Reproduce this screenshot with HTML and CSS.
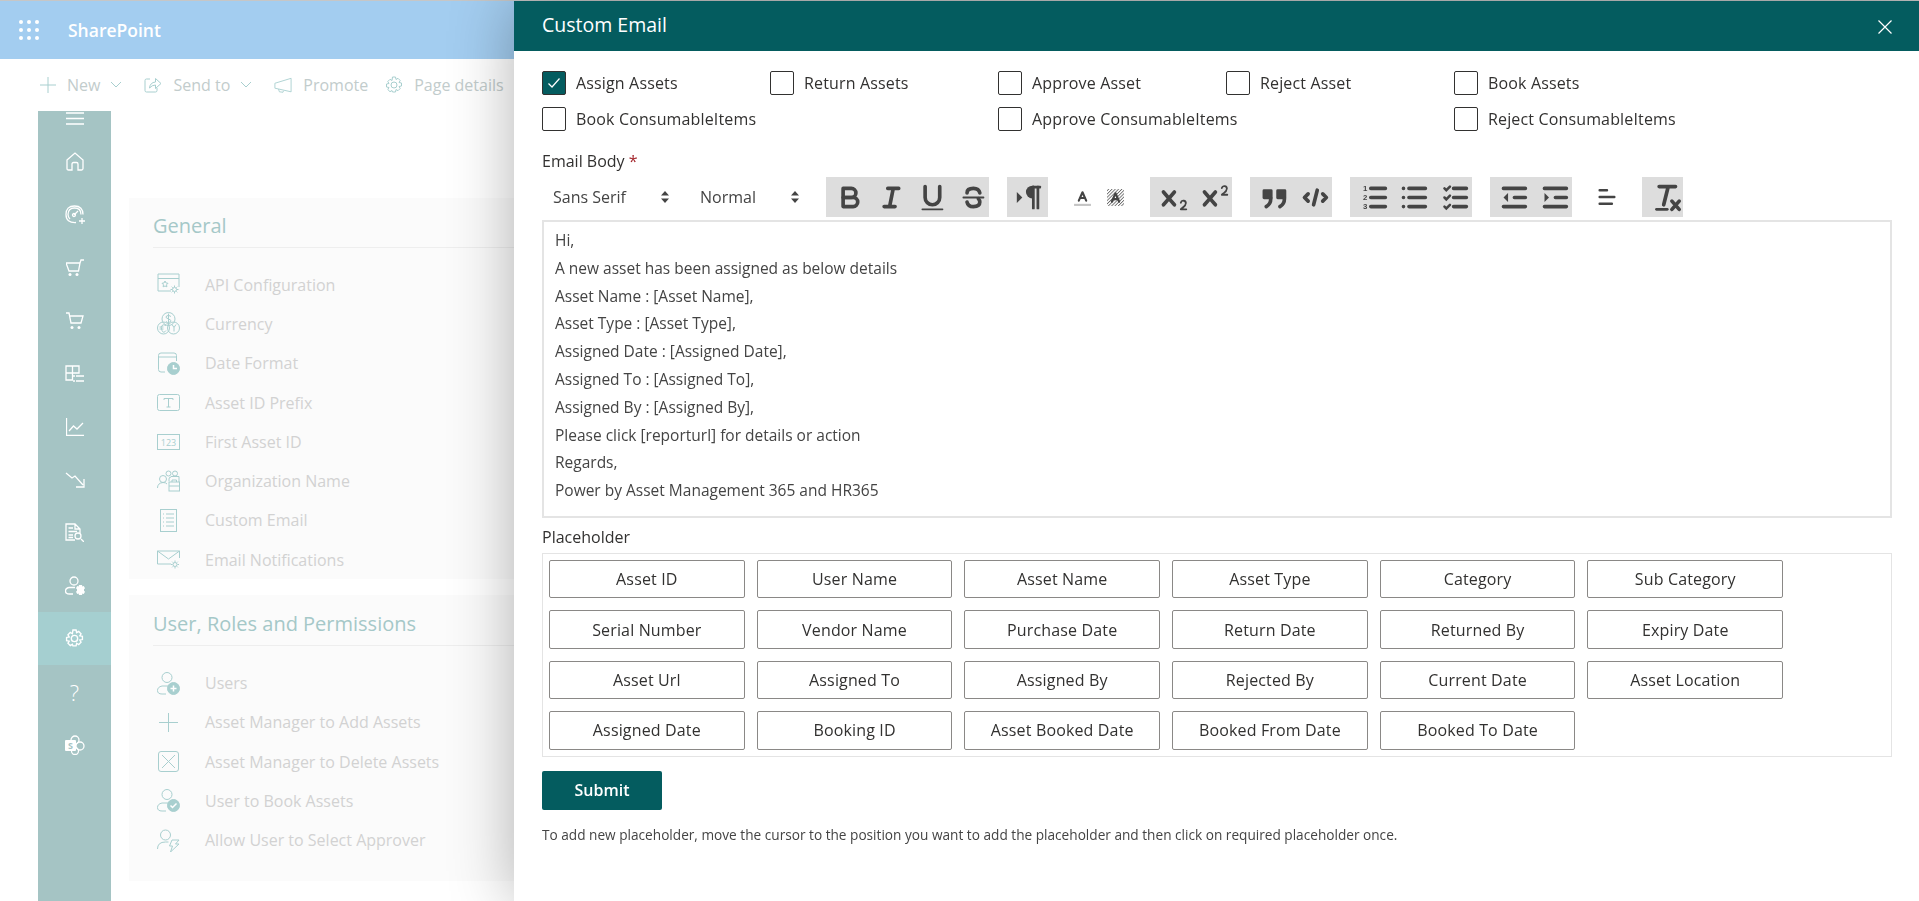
FILE: index.html
```html
<!DOCTYPE html>
<html lang="en">

<head>
    <meta charset="UTF-8">
    <meta name="viewport" content="width=device-width, initial-scale=1.0">
    <title>Custom Email</title>
    <link rel="stylesheet" href="styles.css">
</head>

<body>
    <!-- page behind the panel -->
    <header class="suite-bar">
        <svg class="waffle" width="20" height="20" viewBox="0 0 20 20" fill="#fff">
            <circle cx="2" cy="2" r="2" /><circle cx="10" cy="2" r="2" /><circle cx="18" cy="2" r="2" />
            <circle cx="2" cy="10" r="2" /><circle cx="10" cy="10" r="2" /><circle cx="18" cy="10" r="2" />
            <circle cx="2" cy="18" r="2" /><circle cx="10" cy="18" r="2" /><circle cx="18" cy="18" r="2" />
        </svg>
        <span class="suite-title">SharePoint</span>
    </header>

    <div class="command-bar">
        <span class="cmd">
            <svg class="ico" width="16" height="16" viewBox="0 0 16 16"><path d="M8 0v16M0 8h16" /></svg>New
            <svg class="ico chev" width="10" height="6" viewBox="0 0 10 6"><path d="M0 0l5 5 5-5" /></svg>
        </span>
        <span class="cmd">
            <svg class="ico" width="18" height="18" viewBox="0 0 18 18"><path d="M6 3H2.500Q1 3 1 4.500v10Q1 16 2.500 16h9q1.500 0 1.500-1.500V12M5.500 12Q6 6.500 11.500 6V2.500L17 7.500l-5.500 5V9Q8 9 5.500 12z" /></svg>Send to
            <svg class="ico chev" width="10" height="6" viewBox="0 0 10 6"><path d="M0 0l5 5 5-5" /></svg>
        </span>
        <span class="cmd">
            <svg class="ico" width="18" height="17" viewBox="0 0 20 18"><path d="M19 1v15L1 12V6.500zM5 13l1 3 4 .5.500-1.500" /></svg>Promote
        </span>
        <span class="cmd cmd-last">
            <svg class="ico" width="18" height="18" viewBox="0 0 18 18"><circle cx="9" cy="9" r="3" /><path d="M7.500 1h3l.500 2.500 2-1.200 2.200 2.200-1.200 2 2.500.500v3l-2.500.500 1.200 2-2.200 2.200-2-1.200-.500 2.500h-3L7 14.500l-2 1.200-2.200-2.200 1.200-2L1.500 11V8l2.500-.500-1.200-2L5 3.300l2 1.200z" /></svg>Page details
        </span>
    </div>

    <div class="content">
        <nav class="rail">
            <div class="rail-burger">
                <svg class="ico" width="18" height="13" viewBox="0 0 18 13"><path d="M0 1h18M0 6.500h18M0 12h18" /></svg>
            </div>
            <div class="rail-item"><svg class="ico" width="18" height="19" viewBox="0 0 18 19"><path d="M1 8l8-7 8 7v8.500q0 1.500-1.500 1.500H12v-6q0-1.500-1.500-1.500h-3Q6 10.500 6 12v6H2.500Q1 18 1 16.500z" /></svg></div>
            <div class="rail-item"><svg class="ico" width="20" height="19" viewBox="0 0 20 19"><path d="M11 17.500Q1 18 1 9.500 1 1 9.500 1 18 1 18 9.500M5 14Q3 12 3 9.500 3 3 9.500 3 16 3 16 9.500M9 10l4-4M14 16h6M17 13v6" /><circle cx="9" cy="10" r="1.500" /></svg></div>
            <div class="rail-item"><svg class="ico" width="18" height="18" viewBox="0 0 18 18"><path d="M0 4h14l-1.500 8H3zM14 4l1-3h3" /><circle class="solid" cx="4" cy="15.500" r="1.500" /><circle class="solid" cx="11" cy="15.500" r="1.500" /></svg></div>
            <div class="rail-item"><svg class="ico" width="18" height="18" viewBox="0 0 18 18"><path d="M0 1h3l2 10h10l2-7H3.500" /><circle class="solid" cx="6" cy="15.500" r="1.500" /><circle class="solid" cx="13" cy="15.500" r="1.500" /></svg></div>
            <div class="rail-item"><svg class="ico" width="19" height="18" viewBox="0 0 19 18"><path d="M8 15H1V1h13v7H1M7.500 1v14M11 11h8M11 16h8" /><circle class="solid" cx="9" cy="11" r="1" /><circle class="solid" cx="9" cy="16" r="1" /></svg></div>
            <div class="rail-item"><svg class="ico" width="18" height="18" viewBox="0 0 18 18"><path d="M.5 0v17.500H18M3 13l4.500-5 3.500 3 6-6" /></svg></div>
            <div class="rail-item"><svg class="ico" width="20" height="16" viewBox="0 0 20 16"><path d="M1 1l6 5 3-2 8 9M19 7v8h-8" /></svg></div>
            <div class="rail-item"><svg class="ico" width="19" height="19" viewBox="0 0 19 19"><path d="M10 17H1V1h9l5 5v4M10 1v5h5M3.500 5H8M3.500 8.500H12M3.500 12H8M3.500 14.500H8M16 16l3 3" /><circle cx="13" cy="13" r="3" /></svg></div>
            <div class="rail-item"><svg class="ico" width="20" height="19" viewBox="0 0 20 19"><circle cx="9" cy="5" r="4" /><path d="M8 18H4.500Q.5 18 .5 15t4-3.500H10" /><path class="solid" d="M14 9h3l.400 1.500 1.400-.500 1.200 2.200-1 1 .0 1.600 1 1-1.200 2.200-1.400-.500L17 19h-3l-.400-1.500-1.400.500-1.200-2.200 1-1v-1.600l-1-1L12.200 10l1.400.500z" /></svg></div>
            <div class="rail-item is-active"><svg class="ico" width="19" height="19" viewBox="0 0 18 18"><circle cx="9" cy="9" r="3" /><path d="M7.500 1h3l.500 2.500 2-1.200 2.200 2.200-1.200 2 2.500.500v3l-2.500.500 1.200 2-2.200 2.200-2-1.200-.500 2.500h-3L7 14.500l-2 1.200-2.200-2.200 1.200-2L1.500 11V8l2.500-.500-1.200-2L5 3.300l2 1.200z" /></svg></div>
            <div class="rail-item"><span class="rail-help">?</span></div>
            <div class="rail-item"><svg class="ico" width="20" height="20" viewBox="0 0 20 20"><circle cx="10" cy="5" r="4" /><circle cx="15" cy="11" r="4" /><circle cx="10" cy="16" r="3.500" /><rect class="solid" x="0" y="5" width="11" height="11" rx="1" /><text class="rail-s" x="5.500" y="14">S</text></svg></div>
        </nav>

        <main class="settings">
            <section class="card">
                <h2 class="card-title">General</h2>
                <div class="row"><svg class="ico" width="23" height="23" viewBox="0 0 23 23"><path d="M14 18H1V1h21v13M1 5.500h21" /><path d="M8 8l1 2 2 .300-1.500 1.500.400 2L8 13l-1.900.800.400-2L5 10.300 7 10z" /><circle cx="17.500" cy="16.500" r="2" /><path d="M17.500 12.500v1.500M17.500 19v1.500M13.500 16.500H15M20 16.500h1.500M14.700 13.700l1 1M19.300 18.300l1 1M14.700 19.300l1-1M19.300 14.700l1-1" /></svg>API Configuration</div>
                <div class="row"><svg class="ico" width="23" height="23" viewBox="0 0 23 23"><circle cx="11.500" cy="7" r="6.500" /><circle cx="6.500" cy="16" r="6" /><circle cx="16.500" cy="16" r="6" /><path d="M14 4.500q-2.500-2-4.500-.500t2 3 1.500 3-4-.500M11.500 1.500v11M9 13.500q-2.500-1.500-4 0t0 5 4 0M2.500 15h4M2.500 17h4M15 12.500l2 3 2-3M17 15.500v4" /></svg>Currency</div>
                <div class="row"><svg class="ico" width="23" height="23" viewBox="0 0 23 23"><path d="M8 20H4q-2.500 0-2.500-2.500V3.500Q1.500 1 4 1h13q2.500 0 2.500 2.500V9M1.500 5h18" /><circle class="solid" cx="16.500" cy="16.500" r="6" /><path class="cut" d="M16.500 13v3.500H20" /></svg>Date Format</div>
                <div class="row"><svg class="ico" width="23" height="18" viewBox="0 0 23 18"><rect x=".5" y=".5" width="22" height="16" rx="2" /><path d="M7 6V4.500h9V6M11.500 4.500V13M9.500 13h4" /></svg>Asset ID Prefix</div>
                <div class="row"><svg class="ico" width="23" height="16" viewBox="0 0 23 16"><rect x=".5" y=".5" width="22" height="15" /><text class="ico-text" x="11.500" y="11.500">123</text></svg>First Asset ID</div>
                <div class="row"><svg class="ico" width="23" height="22" viewBox="0 0 23 22"><circle cx="6" cy="9" r="3.500" /><circle cx="11.500" cy="3.500" r="2.500" /><circle cx="18" cy="3.500" r="2.500" /><path d="M.5 18q0-5 5.500-5.500 3 0 4 1.500M14 6.500h8V12M12 11v-2q0-2 2-2" /><rect x="12" y="12" width="10.500" height="9" /><path d="M12 16h10.500M15 12v-2h4.500v2" /></svg>Organization Name</div>
                <div class="row"><svg class="ico" width="23" height="23" viewBox="0 0 23 23"><rect x="3.500" y=".5" width="16" height="22" /><path d="M9 5h8M9 9h8M9 13h8M9 17h8M6 5h1M6 9h1M6 13h1M6 17h1" /></svg>Custom Email</div>
                <div class="row"><svg class="ico" width="23" height="20" viewBox="0 0 23 20"><path d="M14 14H.5V1h22v7M.5 1l11 8 11-8" /><circle cx="18" cy="14.500" r="2" /><path d="M18 10.500V12M18 17v1.500M14 14.500h1.500M20.500 14.500H22M15.200 11.700l1 1M19.800 16.300l1 1M15.200 17.300l1-1M19.800 12.700l1-1" /></svg>Email Notifications</div>
            </section>

            <section class="card card-second">
                <h2 class="card-title">User, Roles and Permissions</h2>
                <div class="row"><svg class="ico" width="23" height="23" viewBox="0 0 23 23"><circle cx="10" cy="5.500" r="5" /><path d="M9 22H5q-4.500 0-4.500-3.500T5 14h6" /><circle class="solid" cx="16.500" cy="16.500" r="6" /><path class="cut" d="M16.500 13.500v6M13.500 16.500h6" /></svg>Users</div>
                <div class="row"><svg class="ico" width="23" height="19" viewBox="0 0 19 19"><path d="M9.500 0v19M0 9.500h19" /></svg>Asset Manager to Add Assets</div>
                <div class="row"><svg class="ico" width="23" height="21" viewBox="0 0 21 21"><rect x=".5" y=".5" width="20" height="20" rx="2.500" /><path d="M4 4l13 13M17 4L4 17" /></svg>Asset Manager to Delete Assets</div>
                <div class="row"><svg class="ico" width="23" height="23" viewBox="0 0 23 23"><circle cx="10" cy="5.500" r="5" /><path d="M9 22H5q-4.500 0-4.500-3.500T5 14h6" /><circle class="solid" cx="16.500" cy="16.500" r="6" /><path class="cut" d="M13.500 16.500l2 2 4-4" /></svg>User to Book Assets</div>
                <div class="row"><svg class="ico" width="23" height="23" viewBox="0 0 23 23"><circle cx="8.500" cy="6" r="5" /><path d="M.5 20q0-7 8-7h3M15 11h7l-3.500 4H22L13.500 23l2-6h-3z" /></svg>Allow User to Select Approver</div>
            </section>
        </main>
    </div>

    <!-- slide-in panel -->
    <aside class="panel">
        <div class="panel-head">
            <span class="panel-title">Custom Email</span>
            <svg class="panel-close" width="14" height="14" viewBox="0 0 14 14"><path d="M.5.500l13 13M13.500.500l-13 13" /></svg>
        </div>

        <div class="panel-body">
            <div class="checks">
                <label class="check"><span class="box is-on"><svg width="14" height="12" viewBox="0 0 14 12"><path d="M1.500 6.500l3.500 3.500 7.500-8.500" /></svg></span>Assign Assets</label>
                <label class="check"><span class="box"></span>Return Assets</label>
                <label class="check"><span class="box"></span>Approve Asset</label>
                <label class="check"><span class="box"></span>Reject Asset</label>
                <label class="check"><span class="box"></span>Book Assets</label>
                <label class="check"><span class="box"></span>Book ConsumableItems</label>
                <label class="check col-3"><span class="box"></span>Approve ConsumableItems</label>
                <label class="check col-5"><span class="box"></span>Reject ConsumableItems</label>
            </div>

            <div class="field-label">Email Body <span class="req">*</span></div>

            <div class="toolbar">
                <div class="pickers">
                    <span class="picker picker-font">Sans Serif<svg width="8" height="12" viewBox="0 0 8 12"><path d="M4 0l4 4.500H0zM4 12L0 7.500h8z" /></svg></span>
                    <span class="picker picker-size">Normal<svg width="8" height="12" viewBox="0 0 8 12"><path d="M4 0l4 4.500H0zM4 12L0 7.500h8z" /></svg></span>
                </div>

                <div class="tool-group">
                    <span class="tool"><svg viewBox="0 0 18 18"><path class="qs" d="M5,4H9.500A2.500,2.500,0,0,1,12,6.500v0A2.500,2.500,0,0,1,9.500,9H5V4Z" /><path class="qs" d="M5,9h5.500A2.500,2.500,0,0,1,13,11.500v0A2.500,2.500,0,0,1,10.500,14H5V9Z" /></svg></span>
                    <span class="tool"><svg viewBox="0 0 18 18"><path class="qs" d="M7 4h6M5 14h6M8 14l2-10" /></svg></span>
                    <span class="tool"><svg viewBox="0 0 18 18"><path class="qs" d="M5,3V9a4,4,0,0,0,4,4h0a4,4,0,0,0,4-4V3" /><rect class="qf" x="3" y="15" width="12" height="1" rx=".5" /></svg></span>
                    <span class="tool"><svg viewBox="0 0 18 18"><path class="qs" d="M12.500 6.500Q12 4 9 4 5.500 4 5.500 6.500M5.500 11.500Q6 14 9 14q3.500 0 3.500-2.500 0-1-.8-1.800" /><rect class="qf" x="3" y="8.500" width="12" height="1" rx=".5" /></svg></span>
                </div>

                <div class="tool-group">
                    <span class="tool"><svg viewBox="1.500 0 18 18"><path class="qf" d="M2.500 12l3-3-3-3z" /><path class="qf" d="M11,2.500a3.500,3.500,0,0,0,0,7h.8V2.500Z" /><rect class="qf" x="10.800" y="2.500" width="1.500" height="13" rx=".5" /><rect class="qf" x="13.300" y="2.500" width="1.500" height="13" rx=".5" /><rect class="qf" x="10.800" y="2.500" width="5" height="1.500" rx=".5" /></svg></span>
                </div>

                <div class="tool-plain">
                    <span class="tool tool-color"><svg viewBox="0 0 18 18"><path class="qs" d="M5.500 12L9 4l3.500 8M6.500 9.500h5" /><rect class="under" x="1" y="15" width="16" height="2" /></svg></span>
                    <span class="tool tool-color"><svg viewBox="0 0 18 18"><defs><pattern id="hatch" width="2.200" height="2.200" patternUnits="userSpaceOnUse" patternTransform="rotate(45)"><rect width=".8" height="2.200" fill="#666" /></pattern></defs><rect x="1" y="1" width="16" height="16" fill="url(#hatch)" /><path class="qs" d="M5.500 13L9 5l3.500 8M6.500 10.500h5" /></svg></span>
                </div>

                <div class="tool-group">
                    <span class="tool"><svg viewBox="0 0 18 18"><path class="qf" d="M15.500,15H13.861a3.858,3.858,0,0,0,1.914-2.975,1.800,1.800,0,0,0-1.600-1.751A1.921,1.921,0,0,0,12.021,11.700a.500.500,0,1,0,.957.291.914.914,0,0,1,1.053-.725.810.810,0,0,1,.744.762c0,1.076-1.170,1.870-1.940,2.431A1.456,1.456,0,0,0,12,15.500a.500.500,0,0,0,.500.500h3A.500.500,0,0,0,15.500,15Z" /><path class="qf" d="M9.650,5.241a1,1,0,0,0-1.409.108L6,7.964,3.759,5.349a1,1,0,1,0-1.519,1.300L4.684,9.500,2.241,12.350a1,1,0,1,0,1.518,1.300L6,11.036,8.241,13.650a1,1,0,1,0,1.518-1.300L7.316,9.500,9.759,6.651A1,1,0,0,0,9.650,5.241Z" /></svg></span>
                    <span class="tool"><svg viewBox="0 0 18 18"><path class="qf" d="M15.500,7H13.861a4.015,4.015,0,0,0,1.914-2.975,1.800,1.800,0,0,0-1.600-1.751A1.922,1.922,0,0,0,12.021,3.700a.500.500,0,1,0,.957.291.917.917,0,0,1,1.053-.725.810.810,0,0,1,.744.762c0,1.077-1.164,1.925-1.934,2.486A1.423,1.423,0,0,0,12,7.500a.500.500,0,0,0,.500.500h3A.500.500,0,0,0,15.500,7Z" /><path class="qf" d="M9.651,5.241a1,1,0,0,0-1.410.108L6,7.964,3.759,5.349a1,1,0,1,0-1.519,1.300L4.683,9.500,2.241,12.350a1,1,0,1,0,1.519,1.300L6,11.036,8.241,13.650a1,1,0,0,0,1.519-1.300L7.317,9.500,9.759,6.651A1,1,0,0,0,9.651,5.241Z" /></svg></span>
                </div>

                <div class="tool-group">
                    <span class="tool"><svg viewBox="0 0 18 18"><rect class="qf" x="2.500" y="4.500" width="5.500" height="5.500" rx=".8" /><rect class="qf" x="10" y="4.500" width="5.500" height="5.500" rx=".8" /><path class="qs" d="M7 9.500Q7 12.500 4.500 14M14.500 9.500q0 3-2.500 4.500" /></svg></span>
                    <span class="tool"><svg viewBox="0 0 18 18"><path class="qs" d="M5 7L3 9l2 2M13 7l2 2-2 2M10 5l-2 8" /></svg></span>
                </div>

                <div class="tool-group">
                    <span class="tool"><svg viewBox="0 0 18 18"><path class="qs" d="M7 4h8M7 9h8M7 14h8" /><text class="num" x="4" y="5.500">1</text><text class="num" x="4" y="10.500">2</text><text class="num" x="4" y="15.500">3</text></svg></span>
                    <span class="tool"><svg viewBox="0 0 18 18"><path class="qs" d="M6 4h9M6 9h9M6 14h9M3 4h0M3 9h0M3 14h0" /></svg></span>
                    <span class="tool"><svg viewBox="0 0 18 18"><path class="qs" d="M8 4h7M8 9h7M8 14h7" /><path class="qthin" d="M3 4l1 1 2-2M3 9l1 1 2-2M3 14l1 1 2-2" /></svg></span>
                </div>

                <div class="tool-group">
                    <span class="tool"><svg viewBox="0 0 18 18"><path class="qs" d="M3 14h12M3 4h12M9 9h6" /><path class="qf" d="M5.500 6.500v5L3 9z" /></svg></span>
                    <span class="tool"><svg viewBox="0 0 18 18"><path class="qs" d="M3 14h12M3 4h12M9 9h6" /><path class="qf" d="M3 6.500v5L5.500 9z" /></svg></span>
                </div>

                <div class="tool-plain">
                    <span class="tool tool-align"><svg viewBox="0 0 18 18"><path class="qs" d="M3 3.500h6M3 9h12M3 14.500h10" /></svg></span>
                </div>

                <div class="tool-group">
                    <span class="tool"><svg viewBox="0 0 18 18"><path class="qs" d="M5 3h9M10 3L7.500 13" /><path class="qthin" d="M3.500 15.500h6" /><path class="qs" d="M12 11l4 4.500M16 11l-4 4.500" /></svg></span>
                </div>
            </div>

            <div class="editor">
                <p>Hi,</p>
                <p>A new asset has been assigned as below details</p>
                <p>Asset Name : [Asset Name],</p>
                <p>Asset Type : [Asset Type],</p>
                <p>Assigned Date : [Assigned Date],</p>
                <p>Assigned To : [Assigned To],</p>
                <p>Assigned By : [Assigned By],</p>
                <p>Please click [reporturl] for details or action</p>
                <p>Regards,</p>
                <p>Power by Asset Management 365 and HR365</p>
            </div>

            <div class="field-label field-label-second">Placeholder</div>

            <div class="placeholders">
                <button class="chip">Asset ID</button>
                <button class="chip">User Name</button>
                <button class="chip">Asset Name</button>
                <button class="chip">Asset Type</button>
                <button class="chip">Category</button>
                <button class="chip">Sub Category</button>
                <button class="chip">Serial Number</button>
                <button class="chip">Vendor Name</button>
                <button class="chip">Purchase Date</button>
                <button class="chip">Return Date</button>
                <button class="chip">Returned By</button>
                <button class="chip">Expiry Date</button>
                <button class="chip">Asset Url</button>
                <button class="chip">Assigned To</button>
                <button class="chip">Assigned By</button>
                <button class="chip">Rejected By</button>
                <button class="chip">Current Date</button>
                <button class="chip">Asset Location</button>
                <button class="chip">Assigned Date</button>
                <button class="chip">Booking ID</button>
                <button class="chip">Asset Booked Date</button>
                <button class="chip">Booked From Date</button>
                <button class="chip">Booked To Date</button>
            </div>

            <button class="submit">Submit</button>

            <p class="hint">To add new placeholder, move the cursor to the position you want to add the placeholder and then click on required placeholder once.</p>
        </div>
    </aside>
</body>

</html>
```

FILE: styles.css
```css
body {
    margin: 0;
    height: 100vh;
    overflow: hidden;
    border-top: 1px solid #c6c6c6;
    box-sizing: border-box;
    background-color: #fff;
    font-family: "Open Sans", "Noto Sans", sans-serif;
    color: #323130;
}

.ico {
    fill: none;
    stroke: #a8cfcf;
    stroke-width: 1;
    flex-shrink: 0;
}

.ico .solid {
    fill: #a8cfcf;
}

.ico .cut {
    stroke: #fff;
    stroke-width: 1.5;
}

.ico-text {
    font-size: 9px;
    text-anchor: middle;
    fill: #a8cfcf;
    stroke: none;
}

/* suite bar */
.suite-bar {
    display: flex;
    align-items: center;
    height: 58px;
    background-color: #a3cdf0;
}

.waffle {
    margin-left: 19px;
}

.suite-title {
    margin-left: 29px;
    font-size: 17.5px;
    font-weight: 600;
    color: #fff;
}

/* command bar */
.command-bar {
    display: flex;
    align-items: center;
    height: 52px;
    padding-left: 40px;
    gap: 23px;
    font-size: 16px;
    color: #c2cccc;
}

.cmd {
    display: flex;
    align-items: center;
    gap: 11px;
}

.cmd-last {
    margin-left: -6px;
}

/* left rail and settings list */
.content {
    display: flex;
    align-items: flex-start;
}

.rail {
    width: 73px;
    height: 790px;
    margin-left: 38px;
    background-color: #a5c4c4;
}

.rail .ico {
    stroke: #fff;
    stroke-width: 1.3;
}

.rail .ico .solid {
    fill: #fff;
    stroke: none;
}

.rail-s {
    font-size: 9px;
    font-weight: 700;
    text-anchor: middle;
    fill: #a5c4c4;
    stroke: none;
}

.rail-burger {
    display: flex;
    justify-content: center;
    align-items: flex-start;
    height: 24px;
    padding-top: 1px;
    box-sizing: border-box;
}

.rail-item {
    display: flex;
    justify-content: center;
    align-items: center;
    height: 53px;
}

.rail-item.is-active {
    background-color: #a5cfd0;
}

.rail-help {
    font-size: 22px;
    font-weight: 300;
    color: #fff;
}

.settings {
    flex: 1;
    margin: 87px 0 0 18px;
}

.card {
    padding: 12px 0 0 24px;
    background-color: #fbfbfb;
}

.card-second {
    margin-top: 16px;
    padding-top: 13px;
    padding-bottom: 21px;
}

.card-title {
    margin: 0 0 17px;
    padding-bottom: 6px;
    border-bottom: 1px solid #eeeeee;
    font-size: 20px;
    line-height: 31px;
    font-weight: 400;
    color: #a5c8c8;
}

.row {
    display: flex;
    align-items: center;
    gap: 25px;
    height: 39.3px;
    padding-left: 4px;
    font-size: 16px;
    color: #d2d2d2;
}

/* panel */
.panel {
    position: fixed;
    top: 1px;
    right: 0;
    bottom: 0;
    width: 1405px;
    background-color: #fff;
    box-shadow: 0 0 60px rgba(0, 0, 0, 0.3);
}

.panel-head {
    display: flex;
    align-items: center;
    justify-content: space-between;
    height: 50px;
    padding: 0 28px;
    background-color: #045c5f;
    color: #fff;
}

.panel-title {
    margin-bottom: 4px;
    font-size: 19.5px;
}

.panel-close {
    fill: none;
    stroke: #fff;
    stroke-width: 1.2;
    margin-right: -1px;
    margin-top: 2px;
}

.panel-body {
    padding: 20px 27px 0 28px;
}

.checks {
    display: grid;
    grid-template-columns: repeat(5, 228px);
    row-gap: 12px;
}

.check {
    display: flex;
    align-items: center;
    gap: 10px;
    font-size: 16px;
    letter-spacing: 0.15px;
    line-height: 24px;
    white-space: nowrap;
}

.col-3 {
    grid-column: 3;
}

.col-5 {
    grid-column: 5;
}

.box {
    display: flex;
    align-items: center;
    justify-content: center;
    width: 24px;
    height: 24px;
    box-sizing: border-box;
    border: 1px solid #323130;
    border-radius: 2px;
    flex-shrink: 0;
}

.box.is-on {
    background-color: #045c5f;
}

.box svg {
    fill: none;
    stroke: #fff;
    stroke-width: 1.2;
}

.field-label {
    margin-top: 20px;
    font-size: 16px;
    line-height: 20px;
}

.field-label-second {
    margin-top: 9px;
}

.req {
    color: #a4262c;
}

/* editor toolbar */
.toolbar {
    display: flex;
    gap: 18px;
    height: 40px;
    margin-top: 6px;
}

.pickers {
    display: flex;
    width: 266px;
}

.picker {
    display: flex;
    align-items: center;
    justify-content: space-between;
    padding-left: 11px;
    box-sizing: border-box;
    font-size: 16px;
    color: #444;
}

.picker svg {
    fill: #444;
}

.picker-font {
    width: 127px;
}

.picker-size {
    width: 139px;
    padding-left: 31px;
    padding-right: 9px;
}

.tool-group,
.tool-plain {
    display: flex;
}

.tool-group {
    background-color: #dddddd;
}

.tool {
    display: flex;
    align-items: center;
    justify-content: center;
    width: 40.85px;
}

/* the icons sit a little right of the button centre */
.tool svg {
    width: 33px;
    height: 33px;
    margin-left: 8px;
}

.tool-color {
    width: 33px;
}

.tool-color svg {
    width: 19px;
    height: 19px;
    margin-left: 0;
}

.tool-align {
    width: 34px;
}

.tool-align svg {
    width: 22px;
    height: 22px;
    margin-left: 0;
}

.qs {
    fill: none;
    stroke: #444;
    stroke-width: 2;
    stroke-linecap: round;
    stroke-linejoin: round;
}

.qthin {
    fill: none;
    stroke: #444;
    stroke-width: 1.4;
    stroke-linecap: round;
}

.qf {
    fill: #444;
}

.under {
    fill: #c4c4c4;
}

.num {
    font-family: "Liberation Sans", sans-serif;
    font-size: 4.3px;
    font-weight: 700;
    text-anchor: middle;
    fill: #444;
}

/* editor */
.editor {
    height: 298px;
    margin-top: 3px;
    padding: 5px 11px;
    box-sizing: border-box;
    border: 2px solid #e4e4e4;
    font-size: 15.5px;
    color: #444;
}

.editor p {
    margin: 0;
    line-height: 27.8px;
}

/* placeholder buttons */
.placeholders {
    display: flex;
    flex-wrap: wrap;
    gap: 12px;
    margin-top: 6px;
    padding: 6px;
    border: 1px solid #e4e4e4;
}

.chip {
    width: 195.7px;
    height: 38.4px;
    padding: 0;
    box-sizing: border-box;
    border: 1px solid #8a8886;
    border-radius: 2px;
    background-color: #fff;
    font-family: inherit;
    letter-spacing: 0.15px;
    font-size: 16px;
    color: #323130;
}

.submit {
    display: block;
    width: 120px;
    height: 39px;
    margin-top: 14px;
    border: 0;
    border-radius: 2px;
    background-color: #045c5f;
    font-family: inherit;
    font-size: 16px;
    font-weight: 600;
    color: #fff;
}

.hint {
    margin: 17px 0 0;
    font-size: 13.65px;
    line-height: 16px;
    color: #444;
}
```
